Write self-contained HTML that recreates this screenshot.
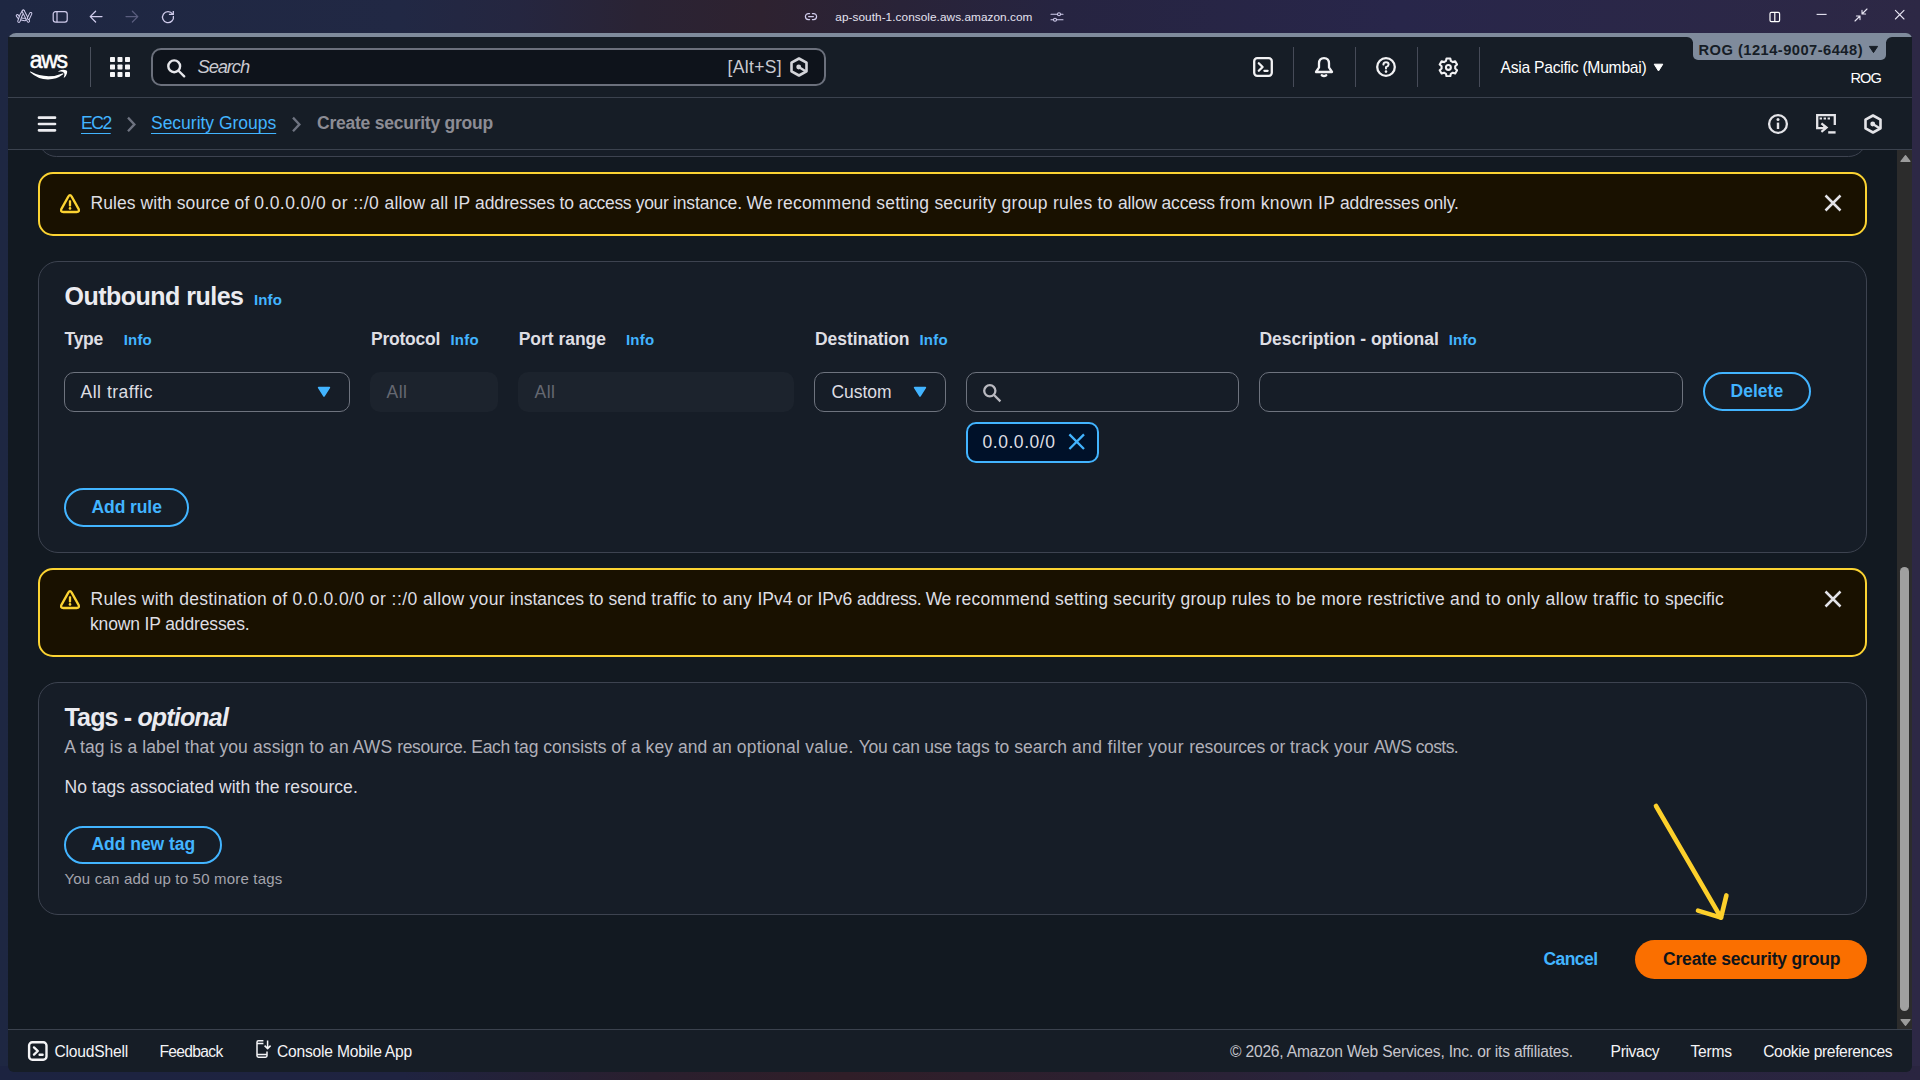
<!DOCTYPE html>
<html lang="en"><head><meta charset="utf-8"><title>Create security group | EC2 | ap-south-1</title>
<style>
html,body{margin:0;padding:0}
body{width:1920px;height:1080px;overflow:hidden;position:relative;
 background:linear-gradient(90deg,#1e2742 0%,#212844 20.8%,#252640 27%,#2a2334 33.3%,#2e2230 39.6%,#292338 46.9%,#262441 55.2%,#28264a 72.9%,#2d2845 100%);
 font-family:"Liberation Sans",sans-serif;}
.t{position:absolute;white-space:nowrap;display:block}
.b{position:absolute;box-sizing:border-box;display:block}
a{color:inherit}
.p{margin:0}
</style></head>
<body>
<div class="b" style="left:0px;top:1066px;width:1920px;height:14px;background:linear-gradient(90deg,#1c2340 0%,#1f2340 21%,#2a1f2e 34%,#301e28 44%,#2c2030 57%,#28243e 71%,#2a2540 100%);"></div>
<div class="b" style="left:8px;top:33px;width:1904px;height:1039px;background:#161d26;border-radius:8px 6px 6px 6px;"></div>
<div class="b" style="left:8px;top:33px;width:1904px;height:9px;background:#7f8b9c;border-radius:8px 6px 0 0;"></div>
<div class="b" style="left:8px;top:37px;width:1685px;height:61px;background:#161d26;border-radius:0 6px 0 0;"></div>
<div class="b" style="left:1886px;top:37px;width:26px;height:61px;background:#161d26;border-radius:6px 0 0 0;"></div>
<div class="b" style="left:1690px;top:60px;width:200px;height:38px;background:#161d26;"></div>
<div class="b" style="left:1693px;top:37px;width:193px;height:23px;background:#7f8b9c;border-radius:0 0 5px 5px;"></div>
<svg class="b" style="left:14px;top:8px;" width="20" height="17" viewBox="0 0 20 17"><g fill="none" stroke="#d0ccec" stroke-linecap="round" stroke-linejoin="round"><path d="M3.4 7.7Q5.4 11.2 11 11.5" stroke="#d0ccec" stroke-width="3.3"/><path d="M3.4 7.7Q5.4 11.2 11 11.5" stroke="#1e2742" stroke-width="1.3"/><path d="M4.9 13.3L7 7.4L9.3 3.3" stroke="#d0ccec" stroke-width="3.3"/><path d="M4.9 13.3L7 7.4L9.3 3.3" stroke="#1e2742" stroke-width="1.3"/><path d="M9.3 3.3L14.4 13.1" stroke="#d0ccec" stroke-width="3.3"/><path d="M9.3 3.3L14.4 13.1" stroke="#1e2742" stroke-width="1.3"/><path d="M16.7 5.6L14.5 10.2" stroke="#d0ccec" stroke-width="3.3"/><path d="M16.7 5.6L14.5 10.2" stroke="#1e2742" stroke-width="1.3"/></g></svg>
<svg class="b" style="left:52px;top:10px;" width="17" height="14" viewBox="0 0 17 14"><g fill="none" stroke="#d0ccec" stroke-width="1.2"><rect x="1.2" y="1.6" width="14" height="10.6" rx="2.4"/><path d="M5 1.6V12.2"/></g></svg>
<svg class="b" style="left:88px;top:9px;" width="16" height="16" viewBox="0 0 16 16"><g fill="none" stroke="#d0ccec" stroke-width="1.25" stroke-linecap="round" stroke-linejoin="round"><path d="M14 7.6H2.2M7.6 2.2L2.2 7.6L7.6 13"/></g></svg>
<svg class="b" style="left:124px;top:9px;" width="16" height="16" viewBox="0 0 16 16"><g fill="none" stroke="#5a5d7e" stroke-width="1.25" stroke-linecap="round" stroke-linejoin="round"><path d="M2 7.6H13.8M8.4 2.2L13.8 7.6L8.4 13"/></g></svg>
<svg class="b" style="left:160px;top:9px;" width="16" height="16" viewBox="0 0 16 16"><g fill="none" stroke="#d0ccec" stroke-width="1.3" stroke-linecap="butt" stroke-linejoin="miter"><path d="M13.39 7.0A5.5 5.5 0 1 1 12.6 5.1"/><path d="M13.3 1.9V5.4H8.9"/></g></svg>
<svg class="b" style="left:804px;top:12px;" width="14" height="10" viewBox="0 0 14 10"><g fill="none" stroke="#d0ccec" stroke-width="1.2" stroke-linecap="round"><path d="M5.6 1.6H4.4A3 3 0 0 0 4.4 7.6H5.6M8.4 1.6H9.6A3 3 0 0 1 9.6 7.6H8.4M4.6 4.6H9.4"/></g></svg>
<span class="t" id="t1" style="left:835.30px;top:10px;font-size:11.8px;line-height:14px;color:#e4e2f0;letter-spacing:0.054px;">ap-south-1.console.aws.amazon.com</span>
<svg class="b" style="left:1050px;top:11px;" width="14" height="12" viewBox="0 0 14 12"><g fill="none" stroke="#d0ccec" stroke-width="1.1" stroke-linecap="round"><path d="M1 3.2H7.4M10.6 3.2H13M1 8.8H3.4M6.6 8.8H13"/><circle cx="9" cy="3.2" r="1.5"/><circle cx="5" cy="8.8" r="1.5"/></g></svg>
<svg class="b" style="left:1769px;top:11px;" width="12" height="12" viewBox="0 0 12 12"><g fill="none" stroke="#ffffff" stroke-width="1.2"><rect x="1" y="1.4" width="9.6" height="9.2" rx="1.4"/><path d="M5.8 1.4V10.6"/></g></svg>
<svg class="b" style="left:1816px;top:13px;" width="12" height="3" viewBox="0 0 12 3"><path d="M0.6 1.4H10.6" stroke="#e8e6f4" stroke-width="1.1" fill="none"/></svg>
<svg class="b" style="left:1854px;top:8px;" width="14" height="14" viewBox="0 0 14 14"><g fill="none" stroke="#e8e6f4" stroke-width="1.1" stroke-linecap="round" stroke-linejoin="round"><path d="M13 1L8 6M8 2.4V6H11.6M1 13L6 8M6 11.6V8H2.4"/></g></svg>
<svg class="b" style="left:1894px;top:9px;" width="12" height="12" viewBox="0 0 12 12"><g fill="none" stroke="#e8e6f4" stroke-width="1.1" stroke-linecap="round"><path d="M1.4 1.4L10 10M10 1.4L1.4 10"/></g></svg>
<div class="b" style="left:8px;top:97px;width:1904px;height:1px;background:#3b424e;"></div>
<span class="t" id="t2" style="left:29.80px;top:47px;font-size:23px;line-height:26px;color:#ffffff;letter-spacing:-1.302px;-webkit-text-stroke:0.5px #fff;">aws</span>
<svg class="b" style="left:28.5px;top:69px;" width="42" height="12" viewBox="0 0 42 12"><g fill="#ffffff"><path d="M1.2 3.2Q0.6 2.4 1.6 2.6Q10 7.2 19.6 7.2Q27 7.2 33.4 4.4Q34.8 4 34.2 5.2Q27.6 10.4 19 10.4Q9 10.4 1.2 3.2Z"/><path d="M34.6 3.6Q33.4 2.2 29.6 2.8Q28.8 2.6 29.8 2Q34 0 37.6 1.4Q38.6 2 38 4.2Q37.2 7 35.4 8.6Q34.6 9 34.8 8.2Q36.2 5 34.6 3.6Z"/></g></svg>
<div class="b" style="left:89.5px;top:47px;width:1.5px;height:40px;background:#4a505c;"></div>
<svg class="b" style="left:110px;top:57px;" width="20" height="20" viewBox="0 0 20 20"><g fill="#f4f4f6"><rect x="0" y="0" width="5" height="5" rx="0.7"/><rect x="7.5" y="0" width="5" height="5" rx="0.7"/><rect x="15" y="0" width="5" height="5" rx="0.7"/><rect x="0" y="7.5" width="5" height="5" rx="0.7"/><rect x="7.5" y="7.5" width="5" height="5" rx="0.7"/><rect x="15" y="7.5" width="5" height="5" rx="0.7"/><rect x="0" y="15" width="5" height="5" rx="0.7"/><rect x="7.5" y="15" width="5" height="5" rx="0.7"/><rect x="15" y="15" width="5" height="5" rx="0.7"/></g></svg>
<div class="b" style="left:151px;top:48px;width:675px;height:38px;background:#0e131b;border:2px solid #6b707c;border-radius:10px;"></div>
<svg class="b" style="left:165px;top:57px;" width="22" height="22" viewBox="0 0 22 22"><g fill="none" stroke="#e6e6ea" stroke-width="2.4" stroke-linecap="round"><circle cx="9.2" cy="9.3" r="5.9"/><path d="M13.8 14L19.2 19.3"/></g></svg>
<span class="t" id="t3" style="left:197.50px;top:56px;font-size:18.4px;line-height:21px;color:#c9c9d0;font-style:italic;letter-spacing:-1.130px;">Search</span>
<span class="t" id="t4" style="left:727.50px;top:57px;font-size:17.5px;line-height:20px;color:#c9c9d0;letter-spacing:0.350px;">[Alt+S]</span>
<svg class="b" style="left:790px;top:57px;" width="19" height="20" viewBox="0 0 19 20"><g fill="none" stroke="#d4d5da" stroke-linejoin="round"><path d="M9 1.5L16.5 5.7V14.3L9 18.5L1.5 14.3V5.7Z" stroke-width="2.6"/><path d="M8.8 10L15.6 14.2" stroke-width="2.4"/></g><circle cx="8.7" cy="10" r="2.45" fill="#d4d5da"/></svg>
<svg class="b" style="left:1252px;top:56px;" width="22" height="22" viewBox="0 0 22 22"><g fill="none" stroke="#f2f2f4" stroke-width="2.3" stroke-linejoin="round" stroke-linecap="round"><rect x="2.2" y="2.2" width="17.6" height="17.6" rx="3"/><path d="M6.8 7.2L10.6 11L6.8 14.8M12.4 14.8H15.6"/></g></svg>
<div class="b" style="left:1293px;top:47px;width:1px;height:40px;background:#464b58;"></div>
<div class="b" style="left:1355px;top:47px;width:1px;height:40px;background:#464b58;"></div>
<div class="b" style="left:1417px;top:47px;width:1px;height:40px;background:#464b58;"></div>
<div class="b" style="left:1479px;top:47px;width:1px;height:40px;background:#464b58;"></div>
<svg class="b" style="left:1313px;top:56px;" width="22" height="22" viewBox="0 0 22 22"><g fill="none" stroke="#f2f2f4" stroke-width="2.3" stroke-linejoin="round" stroke-linecap="round"><path d="M11 2.2C7.6 2.2 6 4.6 6 7.6V11.4L3 16H19L16 11.4V7.6C16 4.6 14.4 2.2 11 2.2Z"/><path d="M8.8 19.2Q11 20.8 13.2 19.2"/></g></svg>
<svg class="b" style="left:1375px;top:56px;" width="22" height="22" viewBox="0 0 22 22"><g fill="none" stroke="#f2f2f4" stroke-width="2.3" stroke-linecap="round" stroke-linejoin="round"><circle cx="11" cy="11" r="8.8"/><path d="M8.4 8.6Q8.6 6.2 11 6.2Q13.6 6.2 13.6 8.4Q13.6 9.8 11 11.2V12.6" stroke-width="2"/></g><circle cx="11" cy="15.6" r="1.3" fill="#f2f2f4"/></svg>
<svg class="b" style="left:1437.6px;top:56.6px;" width="20.8" height="20.8" viewBox="0 0 22 22"><g fill="none" stroke="#f2f2f4" stroke-linejoin="round"><path d="M9 1.6H13L13.6 4.2L15.6 5.4L18.2 4.6L20.2 8L18.2 9.8V12.2L20.2 14L18.2 17.4L15.6 16.6L13.6 17.8L13 20.4H9L8.4 17.8L6.4 16.6L3.8 17.4L1.8 14L3.8 12.2V9.8L1.8 8L3.8 4.6L6.4 5.4L8.4 4.2Z" stroke-width="2.2"/><circle cx="11" cy="11" r="2.6" stroke-width="2.2"/></g></svg>
<span class="t" id="t5" style="left:1500.50px;top:59px;font-size:15.7px;line-height:17px;color:#ffffff;letter-spacing:-0.271px;">Asia Pacific (Mumbai)</span>
<svg class="b" style="left:1653px;top:63px;" width="11" height="9" viewBox="0 0 11 9"><path d="M1.2 1.2H9.8L5.5 8Z" fill="#ffffff" stroke="#ffffff" stroke-width="1" stroke-linejoin="round"/></svg>
<span class="t" id="t6" style="left:1698.50px;top:42px;font-size:14.7px;line-height:16px;color:#161d26;font-weight:700;letter-spacing:0.469px;">ROG (1214-9007-6448)</span>
<svg class="b" style="left:1868px;top:45px;" width="11" height="9" viewBox="0 0 11 9"><path d="M1.4 1.4H9.6L5.5 7.6Z" fill="#161d26" stroke="#161d26" stroke-width="1" stroke-linejoin="round"/></svg>
<span class="t" id="t7" style="left:1850.50px;top:70px;font-size:14.6px;line-height:16px;color:#ffffff;letter-spacing:-0.917px;">ROG</span>
<div class="b" style="left:8px;top:149px;width:1904px;height:1px;background:#3b424e;"></div>
<svg class="b" style="left:37px;top:115px;" width="20" height="18" viewBox="0 0 20 18"><g stroke="#ececf0" stroke-width="2.7" stroke-linecap="round"><path d="M2 2.7H18M2 9H18M2 15.3H18"/></g></svg>
<span class="t" id="t8" style="left:81.00px;top:113px;font-size:17.5px;line-height:20px;color:#42b4ff;letter-spacing:-1.450px;text-decoration:underline;text-underline-offset:4px;text-decoration-thickness:1.3px;">EC2</span>
<svg class="b" style="left:126px;top:116px;" width="11" height="17" viewBox="0 0 11 17"><path d="M2 1.6L8.4 8.4L2 15.2" fill="none" stroke="#6e7380" stroke-width="2.3" stroke-linejoin="miter"/></svg>
<span class="t" id="t9" style="left:151.00px;top:113px;font-size:17.5px;line-height:20px;color:#42b4ff;letter-spacing:-0.018px;text-decoration:underline;text-underline-offset:4px;text-decoration-thickness:1.3px;">Security Groups</span>
<svg class="b" style="left:291px;top:116px;" width="11" height="17" viewBox="0 0 11 17"><path d="M2 1.6L8.4 8.4L2 15.2" fill="none" stroke="#6e7380" stroke-width="2.3" stroke-linejoin="miter"/></svg>
<span class="t" id="t10" style="left:317.00px;top:113px;font-size:17.5px;line-height:20px;color:#8c8c94;font-weight:700;letter-spacing:-0.233px;">Create security group</span>
<svg class="b" style="left:1767px;top:113px;" width="22" height="22" viewBox="0 0 22 22"><g fill="none" stroke="#e4e4e8" stroke-width="2.3"><circle cx="11" cy="11" r="8.9"/></g><rect x="9.8" y="9.6" width="2.4" height="6.4" fill="#e4e4e8"/><circle cx="11" cy="6.6" r="1.5" fill="#e4e4e8"/></svg>
<svg class="b" style="left:1815px;top:113px;" width="22" height="22" viewBox="0 0 22 22"><g fill="none" stroke="#e4e4e8" stroke-width="2.3" stroke-linejoin="miter"><path d="M8 15.2H2.2V2.2H19.8V12"/><path d="M4.6 5.6H7M8.6 5.6H11M12.6 5.6H15" stroke-width="2"/><path d="M6.4 10.4L11.6 14.6L6.4 18.8" stroke-width="2.2"/><path d="M8 14.8H10.6" stroke-width="3"/><path d="M13.2 19.4H20.6" stroke-width="2.4"/></g></svg>
<svg class="b" style="left:1864px;top:114px;" width="19" height="20" viewBox="0 0 19 20"><g fill="none" stroke="#e4e4e8" stroke-linejoin="round"><path d="M9 1.5L16.5 5.7V14.3L9 18.5L1.5 14.3V5.7Z" stroke-width="2.6"/><path d="M8.8 10L15.6 14.2" stroke-width="2.4"/></g><circle cx="8.7" cy="10" r="2.45" fill="#e4e4e8"/></svg>
<div class="b" style="left:8px;top:150px;width:1889px;height:879px;background:#121921;"></div>
<div class="b" style="left:1897px;top:150px;width:15px;height:879px;background:#2c2c2c;"></div>
<svg class="b" style="left:1899.5px;top:154px;" width="12" height="9" viewBox="0 0 12 9"><path d="M5.5 1.6L10 7.4H1Z" fill="#9c9c9c" stroke="#9c9c9c" stroke-width="1.2" stroke-linejoin="round"/></svg>
<div class="b" style="left:1900px;top:567px;width:9px;height:444px;background:#a0a0a0;border-radius:4.5px;"></div>
<svg class="b" style="left:1899.5px;top:1017.5px;" width="12" height="9" viewBox="0 0 12 9"><path d="M1 1.6H10L5.5 7.4Z" fill="#9c9c9c" stroke="#9c9c9c" stroke-width="1.2" stroke-linejoin="round"/></svg>
<div class="b" style="left:38px;top:120px;width:1829px;height:37px;background:#161d27;border:1px solid #3d4350;border-radius:20px;clip-path:inset(30px 0 0 0);"></div>
<div class="b" style="left:38px;top:172px;width:1829px;height:64px;background:#191100;border:2px solid #fbd332;border-radius:15px;"></div>
<svg class="b" style="left:60px;top:193px;" width="20" height="21" viewBox="0 0 20 21"><path d="M8.3 3.6Q10 0.8 11.7 3.6L18.4 15.6Q20 19 16.6 19H3.4Q0 19 1.6 15.6Z" fill="none" stroke="#fbd332" stroke-width="2.3" stroke-linejoin="round"/><rect x="8.85" y="7.2" width="2.3" height="6.2" rx="0.7" fill="#fbd332"/><circle cx="10" cy="15.4" r="1.3" fill="#fbd332"/></svg>
<p class="p">
<span class="t" id="t11" style="left:90.50px;top:193px;font-size:17.5px;line-height:20px;color:#dedee3;letter-spacing:0.063px;white-space:pre;">Rules with source of </span>
<span class="t" id="t12" style="left:254.25px;top:193px;font-size:17.5px;line-height:20px;color:#dedee3;letter-spacing:0.426px;white-space:pre;">0.0.0.0/0 or ::/0 </span>
<span class="t" id="t13" style="left:384.50px;top:193px;font-size:17.5px;line-height:20px;color:#dedee3;letter-spacing:0.177px;white-space:pre;">allow all IP </span>
<span class="t" id="t14" style="left:475.00px;top:193px;font-size:17.5px;line-height:20px;color:#dedee3;letter-spacing:-0.101px;white-space:pre;">addresses to </span>
<span class="t" id="t15" style="left:578.75px;top:193px;font-size:17.5px;line-height:20px;color:#dedee3;letter-spacing:-0.332px;white-space:pre;">access your </span>
<span class="t" id="t16" style="left:673.00px;top:193px;font-size:17.5px;line-height:20px;color:#dedee3;letter-spacing:-0.131px;white-space:pre;">instance. We </span>
<span class="t" id="t17" style="left:777.00px;top:193px;font-size:17.5px;line-height:20px;color:#dedee3;letter-spacing:0.198px;white-space:pre;">recommend </span>
<span class="t" id="t18" style="left:876.25px;top:193px;font-size:17.5px;line-height:20px;color:#dedee3;letter-spacing:0.216px;white-space:pre;">setting security </span>
<span class="t" id="t19" style="left:1001.50px;top:193px;font-size:17.5px;line-height:20px;color:#dedee3;letter-spacing:0.308px;white-space:pre;">group rules to </span>
<span class="t" id="t20" style="left:1118.00px;top:193px;font-size:17.5px;line-height:20px;color:#dedee3;letter-spacing:-0.198px;white-space:pre;">allow access </span>
<span class="t" id="t21" style="left:1219.50px;top:193px;font-size:17.5px;line-height:20px;color:#dedee3;letter-spacing:0.293px;white-space:pre;">from known IP </span>
<span class="t" id="t22" style="left:1340.00px;top:193px;font-size:17.5px;line-height:20px;color:#dedee3;letter-spacing:-0.169px;white-space:pre;">addresses only.</span>
</p>
<svg class="b" style="left:1824px;top:193.7px;" width="18" height="18" viewBox="0 0 18 18"><g fill="none" stroke="#e2e2e7" stroke-width="2.5" stroke-linecap="butt"><path d="M1.5 1.5L16.5 16.5M16.5 1.5L1.5 16.5"/></g></svg>
<div class="b" style="left:38px;top:261px;width:1829px;height:292px;background:#161d27;border:1px solid #3d4350;border-radius:20px;"></div>
<span class="t" id="t23" style="left:64.50px;top:282px;font-size:25px;line-height:28px;color:#ebebf0;font-weight:700;letter-spacing:-0.507px;">Outbound rules</span>
<span class="t" id="t24" style="left:254.00px;top:291px;font-size:15px;line-height:17px;color:#42b4ff;font-weight:700;letter-spacing:0.125px;">Info</span>
<span class="t" id="t25" style="left:64.50px;top:329px;font-size:17.5px;line-height:20px;color:#dedee3;font-weight:700;letter-spacing:-0.262px;">Type</span>
<span class="t" id="t26" style="left:123.70px;top:331px;font-size:15px;line-height:17px;color:#42b4ff;font-weight:700;letter-spacing:0.201px;">Info</span>
<span class="t" id="t27" style="left:371.00px;top:329px;font-size:17.5px;line-height:20px;color:#dedee3;font-weight:700;letter-spacing:-0.248px;">Protocol</span>
<span class="t" id="t28" style="left:450.50px;top:331px;font-size:15px;line-height:17px;color:#42b4ff;font-weight:700;letter-spacing:0.201px;">Info</span>
<span class="t" id="t29" style="left:518.70px;top:329px;font-size:17.5px;line-height:20px;color:#dedee3;font-weight:700;letter-spacing:-0.023px;">Port range</span>
<span class="t" id="t30" style="left:626.00px;top:331px;font-size:15px;line-height:17px;color:#42b4ff;font-weight:700;letter-spacing:0.201px;">Info</span>
<span class="t" id="t31" style="left:815.00px;top:329px;font-size:17.5px;line-height:20px;color:#dedee3;font-weight:700;letter-spacing:-0.072px;">Destination</span>
<span class="t" id="t32" style="left:919.50px;top:331px;font-size:15px;line-height:17px;color:#42b4ff;font-weight:700;letter-spacing:0.201px;">Info</span>
<span class="t" id="t33" style="left:1259.50px;top:329px;font-size:17.5px;line-height:20px;color:#dedee3;font-weight:700;letter-spacing:-0.026px;">Description - optional</span>
<span class="t" id="t34" style="left:1448.70px;top:331px;font-size:15px;line-height:17px;color:#42b4ff;font-weight:700;letter-spacing:0.201px;">Info</span>
<div class="b" style="left:64px;top:372px;width:286px;height:40px;background:#161d27;border:1px solid #6e737e;border-radius:10px;"></div>
<span class="t" id="t35" style="left:80.50px;top:382px;font-size:17.5px;line-height:20px;color:#dedee3;letter-spacing:0.520px;">All traffic</span>
<svg class="b" style="left:317px;top:385.6px;" width="14" height="12" viewBox="0 0 14 12"><path d="M1.6 1.6H12.4L7 10Z" fill="#42b4ff" stroke="#42b4ff" stroke-width="1.6" stroke-linejoin="round"/></svg>
<div class="b" style="left:370px;top:372px;width:128px;height:40px;background:#1c232d;border-radius:10px;"></div>
<span class="t" id="t36" style="left:386.50px;top:382px;font-size:17.5px;line-height:20px;color:#656871;letter-spacing:0.516px;">All</span>
<div class="b" style="left:518px;top:372px;width:276px;height:40px;background:#1c232d;border-radius:10px;"></div>
<span class="t" id="t37" style="left:534.50px;top:382px;font-size:17.5px;line-height:20px;color:#656871;letter-spacing:0.516px;">All</span>
<div class="b" style="left:814px;top:372px;width:132px;height:40px;background:#161d27;border:1px solid #6e737e;border-radius:10px;"></div>
<span class="t" id="t38" style="left:831.50px;top:382px;font-size:17.5px;line-height:20px;color:#dedee3;letter-spacing:-0.049px;">Custom</span>
<svg class="b" style="left:913px;top:385.6px;" width="14" height="12" viewBox="0 0 14 12"><path d="M1.6 1.6H12.4L7 10Z" fill="#42b4ff" stroke="#42b4ff" stroke-width="1.6" stroke-linejoin="round"/></svg>
<div class="b" style="left:966px;top:372px;width:273px;height:40px;background:#161d27;border:1px solid #6e737e;border-radius:10px;"></div>
<svg class="b" style="left:981px;top:382px;" width="22" height="22" viewBox="0 0 22 22"><g fill="none" stroke="#b9b9c0" stroke-width="2.3" stroke-linecap="butt"><circle cx="8.8" cy="8.8" r="5.6"/><path d="M13 13L19.4 19.4"/></g></svg>
<div class="b" style="left:1259px;top:372px;width:424px;height:40px;background:#161d27;border:1px solid #6e737e;border-radius:10px;"></div>
<div class="b" style="left:1703px;top:372px;width:108px;height:39px;border:2px solid #42b4ff;border-radius:20px;"></div>
<span class="t" id="t39" style="left:1730.50px;top:381px;font-size:17.5px;line-height:20px;color:#42b4ff;font-weight:700;letter-spacing:0.027px;">Delete</span>
<div class="b" style="left:966px;top:422px;width:133px;height:41px;background:#001129;border:2px solid #42b4ff;border-radius:10px;"></div>
<span class="t" id="t40" style="left:982.50px;top:432px;font-size:17.5px;line-height:20px;color:#dedee3;letter-spacing:0.542px;">0.0.0.0/0</span>
<svg class="b" style="left:1067.5px;top:433px;" width="18" height="18" viewBox="0 0 18 18"><g fill="none" stroke="#42b4ff" stroke-width="2.3"><path d="M1.4 1.4L16 16M16 1.4L1.4 16"/></g></svg>
<div class="b" style="left:64px;top:488px;width:125px;height:39px;border:2px solid #42b4ff;border-radius:20px;"></div>
<span class="t" id="t41" style="left:91.50px;top:497px;font-size:17.5px;line-height:20px;color:#42b4ff;font-weight:700;letter-spacing:-0.086px;">Add rule</span>
<div class="b" style="left:38px;top:568px;width:1829px;height:89px;background:#191100;border:2px solid #fbd332;border-radius:15px;"></div>
<svg class="b" style="left:60px;top:589px;" width="20" height="21" viewBox="0 0 20 21"><path d="M8.3 3.6Q10 0.8 11.7 3.6L18.4 15.6Q20 19 16.6 19H3.4Q0 19 1.6 15.6Z" fill="none" stroke="#fbd332" stroke-width="2.3" stroke-linejoin="round"/><rect x="8.85" y="7.2" width="2.3" height="6.2" rx="0.7" fill="#fbd332"/><circle cx="10" cy="15.4" r="1.3" fill="#fbd332"/></svg>
<p class="p">
<span class="t" id="t42" style="left:90.50px;top:589px;font-size:17.5px;line-height:20px;color:#dedee3;letter-spacing:0.286px;white-space:pre;">Rules with destination of </span>
<span class="t" id="t43" style="left:292.50px;top:589px;font-size:17.5px;line-height:20px;color:#dedee3;letter-spacing:0.440px;white-space:pre;">0.0.0.0/0 or ::/0 </span>
<span class="t" id="t44" style="left:423.00px;top:589px;font-size:17.5px;line-height:20px;color:#dedee3;letter-spacing:0.304px;white-space:pre;">allow your </span>
<span class="t" id="t45" style="left:510.00px;top:589px;font-size:17.5px;line-height:20px;color:#dedee3;letter-spacing:0.010px;white-space:pre;">instances to send </span>
<span class="t" id="t46" style="left:651.25px;top:589px;font-size:17.5px;line-height:20px;color:#dedee3;letter-spacing:0.425px;white-space:pre;">traffic to any </span>
<span class="t" id="t47" style="left:757.50px;top:589px;font-size:17.5px;line-height:20px;color:#dedee3;letter-spacing:-0.053px;white-space:pre;">IPv4 or IPv6 </span>
<span class="t" id="t48" style="left:857.00px;top:589px;font-size:17.5px;line-height:20px;color:#dedee3;letter-spacing:-0.357px;white-space:pre;">address. We </span>
<span class="t" id="t49" style="left:955.50px;top:589px;font-size:17.5px;line-height:20px;color:#dedee3;letter-spacing:0.223px;white-space:pre;">recommend </span>
<span class="t" id="t50" style="left:1055.00px;top:589px;font-size:17.5px;line-height:20px;color:#dedee3;letter-spacing:0.230px;white-space:pre;">setting security </span>
<span class="t" id="t51" style="left:1180.50px;top:589px;font-size:17.5px;line-height:20px;color:#dedee3;letter-spacing:0.252px;white-space:pre;">group rules to be </span>
<span class="t" id="t52" style="left:1321.25px;top:589px;font-size:17.5px;line-height:20px;color:#dedee3;letter-spacing:0.252px;white-space:pre;">more restrictive </span>
<span class="t" id="t53" style="left:1450.00px;top:589px;font-size:17.5px;line-height:20px;color:#dedee3;letter-spacing:0.418px;white-space:pre;">and to only </span>
<span class="t" id="t54" style="left:1545.50px;top:589px;font-size:17.5px;line-height:20px;color:#dedee3;letter-spacing:0.468px;white-space:pre;">allow traffic to </span>
<span class="t" id="t55" style="left:1665.00px;top:589px;font-size:17.5px;line-height:20px;color:#dedee3;letter-spacing:0.049px;white-space:pre;">specific</span>
</p>
<span class="t" id="t56" style="left:90.00px;top:614px;font-size:17.5px;line-height:20px;color:#dedee3;letter-spacing:-0.139px;">known IP addresses.</span>
<svg class="b" style="left:1824px;top:589.9px;" width="18" height="18" viewBox="0 0 18 18"><g fill="none" stroke="#e2e2e7" stroke-width="2.5" stroke-linecap="butt"><path d="M1.5 1.5L16.5 16.5M16.5 1.5L1.5 16.5"/></g></svg>
<div class="b" style="left:38px;top:682px;width:1829px;height:233px;background:#161d27;border:1px solid #3d4350;border-radius:20px;"></div>
<span class="t" id="t57" style="left:64.50px;top:703px;font-size:25px;line-height:28px;color:#ebebf0;font-weight:700;letter-spacing:-0.829px;">Tags - <i>optional</i></span>
<p class="p">
<span class="t" id="t58" style="left:64.25px;top:737px;font-size:17.5px;line-height:20px;color:#b0b0b9;letter-spacing:0.106px;white-space:pre;">A tag is a label </span>
<span class="t" id="t59" style="left:184.75px;top:737px;font-size:17.5px;line-height:20px;color:#b0b0b9;letter-spacing:0.120px;white-space:pre;">that you assign </span>
<span class="t" id="t60" style="left:309.25px;top:737px;font-size:17.5px;line-height:20px;color:#b0b0b9;letter-spacing:0.111px;white-space:pre;">to an AWS </span>
<span class="t" id="t61" style="left:397.25px;top:737px;font-size:17.5px;line-height:20px;color:#b0b0b9;letter-spacing:-0.371px;white-space:pre;">resource. Each </span>
<span class="t" id="t62" style="left:514.25px;top:737px;font-size:17.5px;line-height:20px;color:#b0b0b9;letter-spacing:-0.021px;white-space:pre;">tag consists </span>
<span class="t" id="t63" style="left:611.25px;top:737px;font-size:17.5px;line-height:20px;color:#b0b0b9;letter-spacing:0.060px;white-space:pre;">of a key and an </span>
<span class="t" id="t64" style="left:736.75px;top:737px;font-size:17.5px;line-height:20px;color:#b0b0b9;letter-spacing:0.267px;white-space:pre;">optional value. </span>
<span class="t" id="t65" style="left:858.75px;top:737px;font-size:17.5px;line-height:20px;color:#b0b0b9;letter-spacing:-0.234px;white-space:pre;">You can use </span>
<span class="t" id="t66" style="left:956.50px;top:737px;font-size:17.5px;line-height:20px;color:#b0b0b9;letter-spacing:0.041px;white-space:pre;">tags to search </span>
<span class="t" id="t67" style="left:1071.90px;top:737px;font-size:17.5px;line-height:20px;color:#b0b0b9;letter-spacing:0.400px;white-space:pre;">and filter your </span>
<span class="t" id="t68" style="left:1189.20px;top:737px;font-size:17.5px;line-height:20px;color:#b0b0b9;letter-spacing:-0.102px;white-space:pre;">resources or </span>
<span class="t" id="t69" style="left:1290.00px;top:737px;font-size:17.5px;line-height:20px;color:#b0b0b9;letter-spacing:0.201px;white-space:pre;">track your </span>
<span class="t" id="t70" style="left:1373.90px;top:737px;font-size:17.5px;line-height:20px;color:#b0b0b9;letter-spacing:-0.550px;white-space:pre;">AWS costs.</span>
</p>
<span class="t" id="t71" style="left:64.50px;top:777px;font-size:17.5px;line-height:20px;color:#dedee3;letter-spacing:0.040px;">No tags associated with the resource.</span>
<div class="b" style="left:64px;top:825.5px;width:158px;height:38.5px;border:2px solid #42b4ff;border-radius:20px;"></div>
<span class="t" id="t72" style="left:91.50px;top:834px;font-size:17.5px;line-height:20px;color:#42b4ff;font-weight:700;letter-spacing:-0.030px;">Add new tag</span>
<span class="t" id="t73" style="left:64.50px;top:870px;font-size:15px;line-height:17px;color:#a4a4ad;letter-spacing:0.197px;">You can add up to 50 more tags</span>
<svg class="b" style="left:1640px;top:795px;" width="100" height="135" viewBox="0 0 100 135"><g fill="none" stroke="#fdd02b" stroke-width="4.6" stroke-linecap="round" stroke-linejoin="round"><path d="M16 11L81 122.6"/><path d="M58 115.6L81 122.6L86.4 100.4"/></g></svg>
<span class="t" id="t74" style="left:1543.50px;top:949px;font-size:17.5px;line-height:20px;color:#42b4ff;font-weight:700;letter-spacing:-0.565px;">Cancel</span>
<div class="b" style="left:1635px;top:940px;width:232px;height:39px;background:#fa6f00;border-radius:20px;"></div>
<span class="t" id="t75" style="left:1663.00px;top:949px;font-size:17.5px;line-height:20px;color:#0f141a;font-weight:700;letter-spacing:-0.171px;">Create security group</span>
<div class="b" style="left:8px;top:1029px;width:1904px;height:1px;background:#3b424e;"></div>
<svg class="b" style="left:27px;top:1040px;" width="22" height="22" viewBox="0 0 22 22"><g fill="none" stroke="#f4f4f6" stroke-width="2.4" stroke-linejoin="round" stroke-linecap="round"><rect x="2.1" y="2.3" width="17.4" height="17.4" rx="3.2"/><path d="M7 7.4L10.8 11L7 14.6M12.6 14.8H15.6"/></g></svg>
<span class="t" id="t76" style="left:54.50px;top:1043px;font-size:15.6px;line-height:17px;color:#f4f4f6;letter-spacing:-0.193px;">CloudShell</span>
<span class="t" id="t77" style="left:159.50px;top:1043px;font-size:15.6px;line-height:17px;color:#f4f4f6;letter-spacing:-0.686px;">Feedback</span>
<svg class="b" style="left:255px;top:1039px;" width="18" height="20" viewBox="0 0 18 20"><g fill="none" stroke="#f4f4f6" stroke-width="1.5" stroke-linejoin="round"><path d="M8.4 1.8H3.4Q2 1.8 2 3.2V16.8Q2 18.2 3.4 18.2H10.6Q12 18.2 12 16.8V12.6"/><path d="M2 4.4H8.4M2 15.6H12"/><path d="M12.6 1.4V9.4M9.6 6.6L12.6 9.6L15.6 6.6"/></g></svg>
<span class="t" id="t78" style="left:277.00px;top:1043px;font-size:15.6px;line-height:17px;color:#f4f4f6;letter-spacing:-0.206px;">Console Mobile App</span>
<span class="t" id="t79" style="left:1230.00px;top:1043px;font-size:15.6px;line-height:17px;color:#c6c6cd;letter-spacing:-0.198px;">© 2026, Amazon Web Services, Inc. or its affiliates.</span>
<span class="t" id="t80" style="left:1610.60px;top:1043px;font-size:15.6px;line-height:17px;color:#f4f4f6;letter-spacing:-0.346px;">Privacy</span>
<span class="t" id="t81" style="left:1690.50px;top:1043px;font-size:15.6px;line-height:17px;color:#f4f4f6;letter-spacing:-0.252px;">Terms</span>
<span class="t" id="t82" style="left:1763.20px;top:1043px;font-size:15.6px;line-height:17px;color:#f4f4f6;letter-spacing:-0.346px;">Cookie preferences</span>
</body></html>
